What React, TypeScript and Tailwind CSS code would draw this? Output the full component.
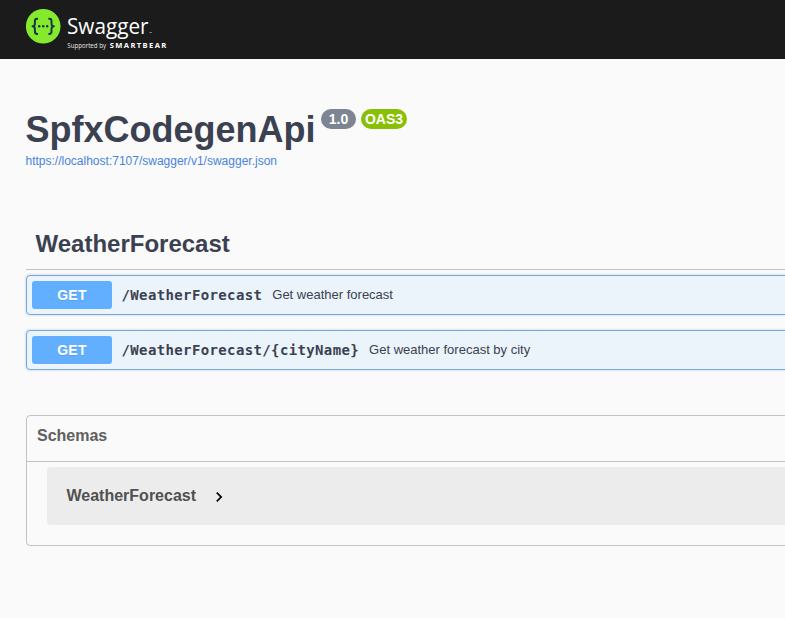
import React from "react";

function SwaggerLogo() {
  return (
    <svg width="150" height="48" viewBox="0 0 150 48" className="block" aria-label="Swagger">
      <circle cx="17.2" cy="20.3" r="17.3" fill="#85ea2d" />
      <g fill="none" stroke="#173647" strokeWidth="2" strokeLinejoin="round">
        <path d="M12 12.7h-.9c-1.7 0-2.2.9-2.2 2.4v2.3c0 1.8-.7 2.8-2.3 2.9 1.6.1 2.3 1.1 2.3 2.9v2.3c0 1.5.5 2.4 2.2 2.4h.9" />
        <path d="M22.4 12.7h.9c1.7 0 2.2.9 2.2 2.4v2.3c0 1.8.7 2.8 2.3 2.9-1.6.1-2.3 1.1-2.3 2.9v2.3c0 1.5-.5 2.4-2.2 2.4h-.9" />
      </g>
      <g fill="#173647">
        <circle cx="13.2" cy="20.3" r="1.2" />
        <circle cx="17.2" cy="20.3" r="1.2" />
        <circle cx="21.2" cy="20.3" r="1.2" />
      </g>
      <g fill="#fff" fontFamily="'Open Sans', sans-serif">
        <text x="41" y="27.6" fontSize="22.5" textLength="81.5" lengthAdjust="spacingAndGlyphs">Swagger</text>
        <rect x="123.6" y="26" width="2.2" height="0.7" opacity="0.7" />
        <text x="41.3" y="41.6" fontSize="6.6" textLength="38.7" lengthAdjust="spacingAndGlyphs" opacity="0.9">Supported by</text>
        <text x="83.7" y="41.6" fontSize="7.6" fontWeight="700" textLength="56.6">SMARTBEAR</text>
      </g>
    </svg>
  );
}

function Operation({ path, summary }: { path: string; summary: string }) {
  return (
    <div className="flex h-10 items-center rounded border border-[#6fa9e4] bg-[#ebf3fb] pl-[5px] shadow-[0_0_3px_rgba(0,0,0,0.19)]">
      <span className="flex h-7 w-20 items-center justify-center rounded-[3px] bg-[#61affe] text-sm font-bold tracking-[0.3px] text-white [text-shadow:0_1px_0_rgba(0,0,0,0.1)]">
        GET
      </span>
      <span className="pt-px pl-[9.5px] font-['DejaVu_Sans_Mono',monospace] text-[14px] font-bold tracking-[0.37px] whitespace-nowrap">
        {path}
      </span>
      <span className="pl-[10px] text-[13px] whitespace-nowrap">{summary}</span>
    </div>
  );
}

export default function App() {
  return (
    <div className="h-[618px] overflow-hidden bg-[#fafafa] font-['Liberation_Sans',Arial,sans-serif] text-[#3b4151]">
      <header className="h-[59px] bg-[#1b1b1b] pt-[6px] pl-[26px]">
        <SwaggerLogo />
      </header>

      <main className="w-[1400px] pl-[26px]">
        <div className="flex h-[92px] items-start pt-[50px]">
          <h1 className="-ml-[0.5px] text-[36px] leading-[41px] font-bold">SpfxCodegenApi</h1>
          <span className="ml-[5.5px] flex h-5 w-[35px] items-center justify-center rounded-full bg-[#7d8492] text-sm font-bold text-white">
            1.0
          </span>
          <span className="ml-[5px] flex h-5 w-[46px] items-center justify-center rounded-full bg-[#89bf04] text-sm font-bold text-white">
            OAS3
          </span>
        </div>
        <a className="-ml-[0.5px] block h-[68px] pt-[3px] text-[12px] leading-[14px] text-[#4983dd]">
          https://localhost:7107/swagger/v1/swagger.json
        </a>

        <section>
          <h2 className="h-[51px] border-b border-[#3b4151]/30 pt-[11px] pl-[9.5px] text-[24px] leading-[28px] font-bold">
            WeatherForecast
          </h2>
          <div className="flex flex-col gap-[15px] pt-[5px]">
            <Operation path="/WeatherForecast" summary="Get weather forecast" />
            <Operation path="/WeatherForecast/{cityName}" summary="Get weather forecast by city" />
          </div>
        </section>

        <section className="mt-[45px] h-[131px] rounded border border-[#3b4151]/30 text-[16px] font-bold text-[#505050]">
          <h4 className="h-[46px] border-b border-[#3b4151]/30 pt-[10px] pl-[10px] leading-[20px] text-[#606060]">
            Schemas
          </h4>
          <div className="mt-[5px] ml-5 flex h-[58px] items-center rounded bg-[#ececec] pl-[19.5px]">
            <span>WeatherForecast</span>
            <svg width="20" height="20" viewBox="0 0 24 24" className="mt-px ml-[12.5px]">
              <path d="M10 6L8.59 7.41 13.17 12l-4.58 4.59L10 18l6-6z" fill="#000" />
            </svg>
          </div>
        </section>
      </main>
    </div>
  );
}
